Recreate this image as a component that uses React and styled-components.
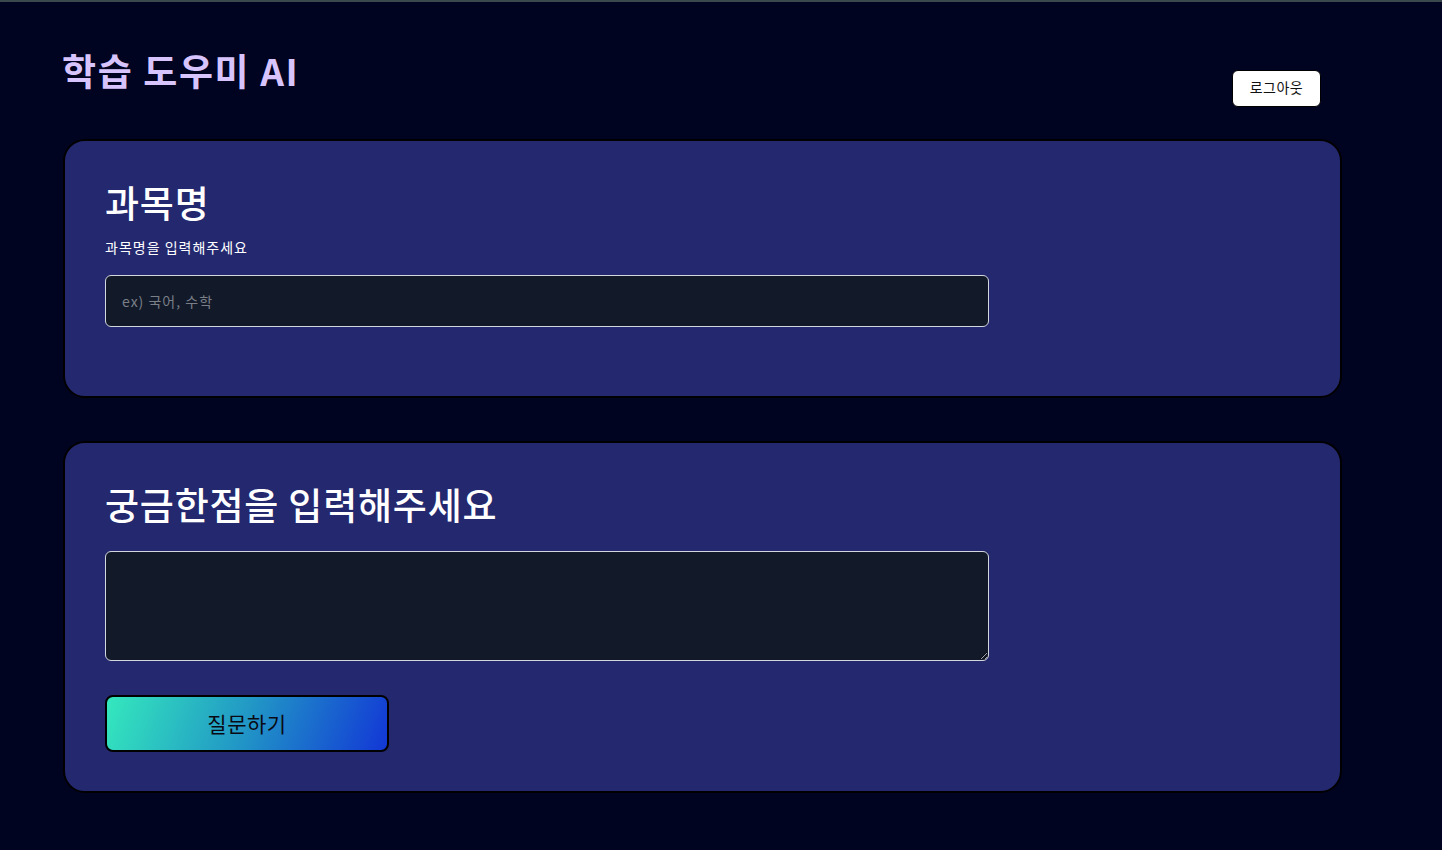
import React from "react";
import styled, { createGlobalStyle } from "styled-components";

const GlobalStyle = createGlobalStyle`
  html, body {
    margin: 0;
    padding: 0;
    background: #000420;
  }
  body {
    font-family: "Noto Sans CJK KR", "Noto Sans", sans-serif;
  }
  * { box-sizing: border-box; }
`;

const Page = styled.div`
  min-height: 850px;
  border-top: 2px solid #3a4a4c;
  padding: 0 100px 40px 62px;
`;

const Header = styled.header`
  display: flex;
  justify-content: space-between;
  align-items: flex-start;
  height: 137px;
  padding-right: 21px;
`;

const Title = styled.h1`
  margin: 42px 0 0;
  font-size: 37px;
  line-height: 52px;
  font-weight: 700;
  color: #d8c4fc;
  letter-spacing: 1.6px;
`;

const LogoutButton = styled.button`
  margin-top: 68px;
  width: 89px;
  height: 37px;
  background: #ffffff;
  color: #111;
  border: 1px solid #000;
  border-radius: 6px;
  font-family: "Noto Sans CJK KR", sans-serif;
  font-size: 14px;
  letter-spacing: 0.5px;
  padding: 0 0 4px;
  cursor: pointer;
`;

const Card = styled.section`
  margin-left: 1px;
  background: #23286f;
  border: 2px solid #000;
  border-radius: 22px;
  padding: ${(p) => p.$pad};
  & + & {
    margin-top: 43px;
  }
`;

const Heading = styled.h2`
  margin: 0;
  font-size: 37px;
  line-height: 48px;
  font-weight: 500;
  color: #ffffff;
  letter-spacing: 0.8px;
`;

const Label = styled.label`
  display: block;
  margin-top: 11px;
  font-size: 14px;
  line-height: 20px;
  color: #ffffff;
  letter-spacing: 1px;
`;

const Input = styled.input`
  display: block;
  margin-top: 18px;
  width: 884px;
  height: 52px;
  background: #121a29;
  border: 1px solid #d4d6de;
  border-radius: 6px;
  padding: 0 16px;
  color: #fff;
  font-family: "Noto Sans CJK KR", sans-serif;
  font-size: 14px;
  letter-spacing: 1px;
  outline: none;
  &::placeholder {
    color: #7b7f88;
  }
`;

const TextArea = styled.textarea`
  display: block;
  margin-top: 23px;
  width: 884px;
  height: 110px;
  background: #121a29;
  border: 1px solid #d4d6de;
  border-radius: 6px;
  padding: 12px 16px;
  color: #fff;
  font-family: "Noto Sans CJK KR", sans-serif;
  font-size: 14px;
  outline: none;
`;

const AskButton = styled.button`
  display: flex;
  align-items: center;
  justify-content: center;
  margin-top: 34px;
  width: 284px;
  height: 57px;
  border: 2px solid #000;
  border-radius: 8px;
  background: linear-gradient(110deg, #34e8bd 0%, #2196c6 50%, #1237d6 100%);
  color: #0a0a14;
  font-family: "Noto Sans CJK KR", sans-serif;
  font-size: 21px;
  letter-spacing: 0.5px;
  padding: 0 0 2px;
  cursor: pointer;
`;

export default function App() {
  return (
    <>
      <GlobalStyle />
      <Page>
        <Header>
          <Title>학습 도우미 AI</Title>
          <LogoutButton>로그아웃</LogoutButton>
        </Header>
        <Card $pad="37px 40px 69px">
          <Heading>과목명</Heading>
          <Label htmlFor="subject">과목명을 입력해주세요</Label>
          <Input id="subject" placeholder="ex) 국어, 수학" />
        </Card>
        <Card $pad="37px 40px 39px">
          <Heading>궁금한점을 입력해주세요</Heading>
          <TextArea />
          <AskButton>질문하기</AskButton>
        </Card>
      </Page>
    </>
  );
}
